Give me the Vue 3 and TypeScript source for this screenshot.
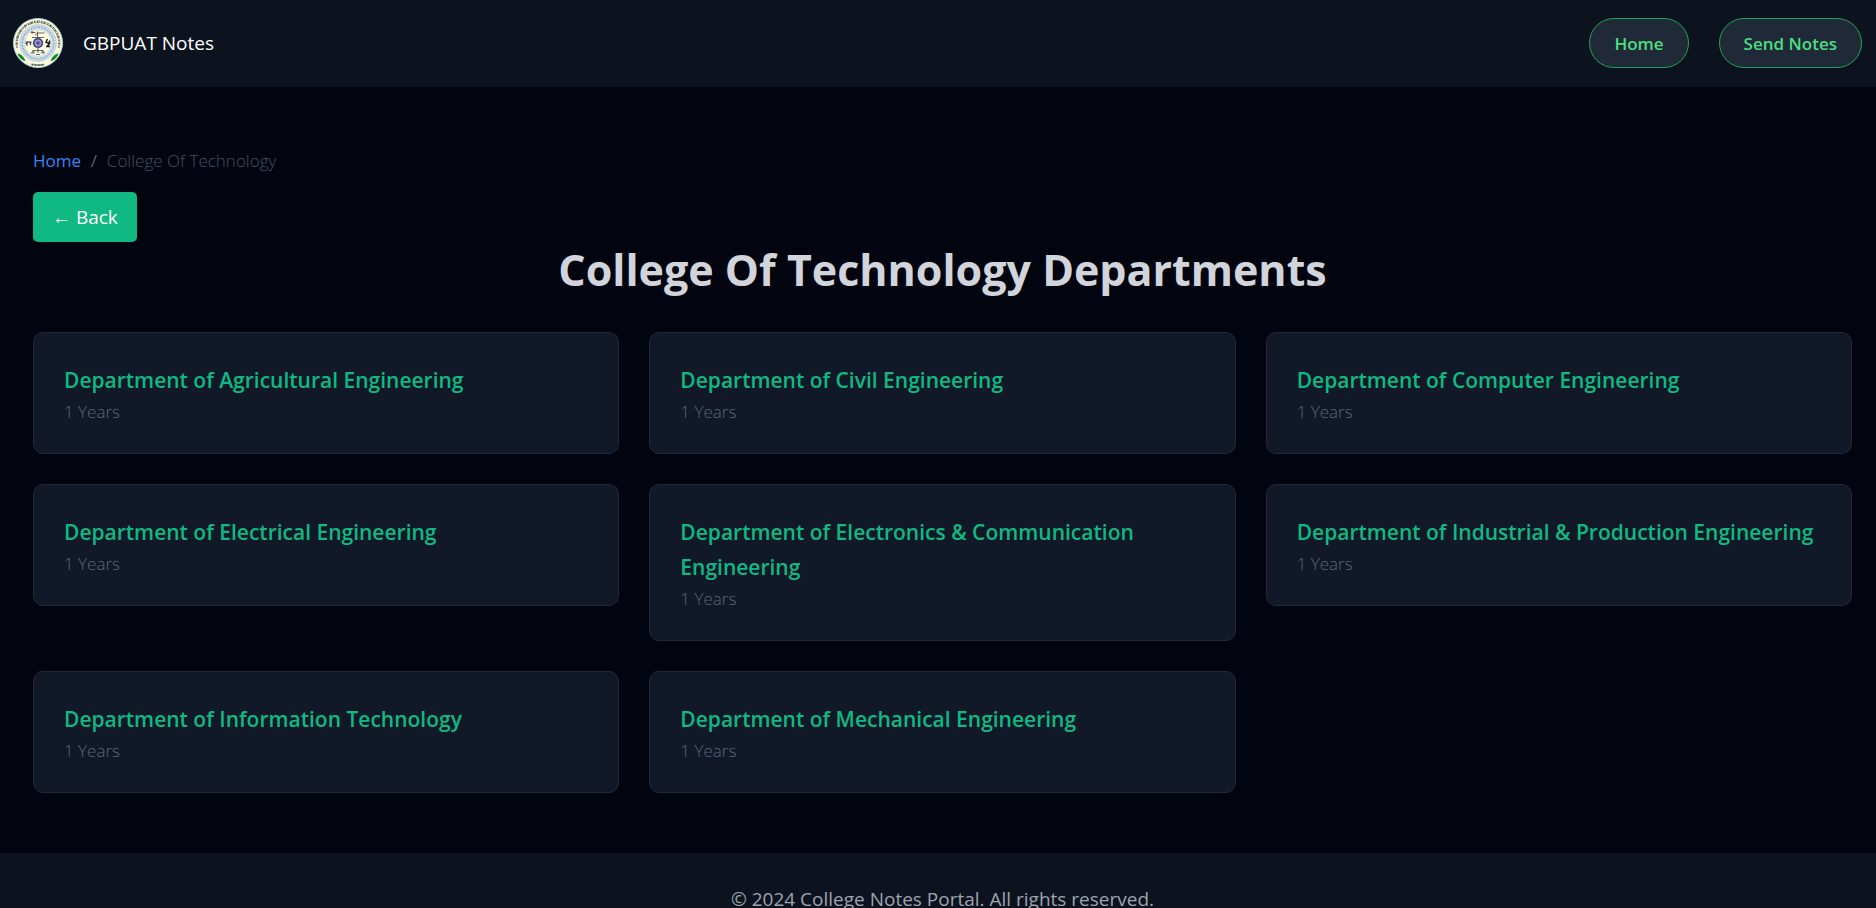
<script setup lang="ts">
interface Department {
  name: string
  years: number
}

const college = 'College Of Technology'

const departments: Department[] = [
  { name: 'Department of Agricultural Engineering', years: 1 },
  { name: 'Department of Civil Engineering', years: 1 },
  { name: 'Department of Computer Engineering', years: 1 },
  { name: 'Department of Electrical Engineering', years: 1 },
  { name: 'Department of Electronics & Communication Engineering', years: 1 },
  { name: 'Department of Industrial & Production Engineering', years: 1 },
  { name: 'Department of Information Technology', years: 1 },
  { name: 'Department of Mechanical Engineering', years: 1 },
]

const spokes = Array.from({ length: 8 }, (_, i) => i * 22.5)
</script>

<template>
  <div class="page">
    <header class="topbar">
      <a class="brand" href="#">
        <svg class="logo" viewBox="0 0 50 50" aria-hidden="true">
          <circle cx="25" cy="25" r="24.5" fill="#fbfade" stroke="#a9cfdc" />
          <circle cx="25" cy="25" r="18.3" fill="#cfe0ee" stroke="#8fb0c4" stroke-width=".5" />
          <circle cx="25" cy="25" r="13.4" fill="#fdfcdc" stroke="#bccfd8" stroke-width=".6" />
          <path d="M4.200 29.500A21.300 21.300 0 1 1 45.800 29.500" fill="none" stroke="#565650" stroke-width="2.300" stroke-dasharray="1 .6 .5 .8 1.500 .6 .7 1.100" />
          <path d="M4.500 22A20.800 20.800 0 0 1 45.500 22" fill="none" stroke="#565650" stroke-width=".5" stroke-dasharray="4 1.600 6 1.400" />
          <circle cx="25" cy="25" r="15.800" fill="none" stroke="#8796ac" stroke-width="1.700" stroke-dasharray=".8 .9 .5 .7" />
          <path d="M4.500 35.500c3 0 6.500 3 8 7.500-3.500-.5-6.700-3.500-8-7.500z" fill="#118a2c" />
          <path d="M45.500 35.500c-3 0-6.500 3-8 7.500 3.500-.5 6.700-3.500 8-7.500z" fill="#118a2c" />
          <path d="M18.500 46.300q6.500 1.500 13 0" fill="none" stroke="#5a584d" stroke-width="1.800" stroke-dasharray="1.700 .4 .8 .4" />
          <g fill="none" stroke="#403a4e" stroke-width=".8">
            <path d="M18.500 14.500h4M24.500 13.500v6M22 17l3-2h6.500M19 19.500h12M25 30v5M20 32.500h10M20 32.500l-1.500 2.500h3zM30 32.500l-1.500 2.500h3zM23 36.500h4" />
            <path d="M12.500 24.200h6M14 24.200v3.500M17.500 24v3M12.500 25.500h2" stroke-width="1.200" />
            <path d="M34.500 21l-1.500 3 3.500 1.500-2.500 3M33 28.500h4M36.500 22.500v3" stroke="#171a24" stroke-width="1.500" />
          </g>
          <path d="M18 13.500h2.500v1.800H18z" fill="#8d3545" />
          <circle cx="25" cy="25" r="4.300" fill="#d9d6ee" stroke="#413a86" stroke-width="1.500" />
          <path
            v-for="angle in spokes"
            :key="angle"
            d="M19.500 25h11"
            stroke="#413a86"
            stroke-width=".5"
            :transform="`rotate(${angle} 25 25)`"
          />
        </svg>
        <span>GBPUAT Notes</span>
      </a>
      <nav class="links">
        <a class="pill" href="#">Home</a>
        <a class="pill" href="#">Send Notes</a>
      </nav>
    </header>

    <main class="content">
      <nav class="crumbs" aria-label="Breadcrumb">
        <a href="#">Home</a>
        <span class="slash">/</span>
        <span>{{ college }}</span>
      </nav>
      <button class="back" type="button">← Back</button>
      <h1>{{ college }} Departments</h1>
      <section class="grid">
        <a v-for="item in departments" :key="item.name" class="card" href="#">
          <h2>{{ item.name }}</h2>
          <p>{{ item.years }} Years</p>
        </a>
      </section>
    </main>

    <footer class="footer">© 2024 College Notes Portal. All rights reserved.</footer>
  </div>
</template>

<style>
body {
  margin: 0;
  background: #02050f;
}
</style>

<style scoped>
.page {
  min-height: 100vh;
  background: #02050f;
  font-family: "Segoe UI", "Open Sans", "Noto Sans", sans-serif;
  font-size: 17px;
}

a {
  text-decoration: none;
}

.topbar {
  display: flex;
  align-items: center;
  justify-content: space-between;
  height: 87px;
  padding: 0 14px 2px 13px;
  box-sizing: border-box;
  background: #0d131e;
}

.brand {
  display: flex;
  align-items: center;
  gap: 20px;
  color: #fff;
  font-size: 19px;
}

.logo {
  width: 50px;
  height: 50px;
}

.links {
  display: flex;
  gap: 30px;
}

.pill {
  height: 50px;
  padding: 0 24px;
  box-sizing: border-box;
  border: 1px solid #22a352;
  border-radius: 25px;
  background: #1f2937;
  color: #4ade80;
  font-weight: 600;
  line-height: 50px;
}

.content {
  padding: 60px 24px 60px 33px;
}

.crumbs {
  display: flex;
  gap: 10px;
  margin-bottom: 18px;
  color: #465162;
  font-weight: 300;
  line-height: 27px;
}

.crumbs a {
  color: #3b82f6;
  font-weight: 400;
}

.slash {
  color: #8b92a0;
}

.back {
  display: block;
  height: 50px;
  padding: 0 19px;
  border: 0;
  border-radius: 5px;
  background: #10b981;
  color: #fff;
  font-family: inherit;
  font-size: 19px;
}

h1 {
  margin: 0 0 35px;
  color: #d1d5db;
  font-size: 43px;
  font-weight: 700;
  line-height: 55px;
  text-align: center;
}

.grid {
  display: grid;
  grid-template-columns: repeat(3, 1fr);
  align-items: start;
  gap: 30px;
}

.card {
  padding: 30px 30px 28px;
  border: 1px solid #1f2937;
  border-radius: 10px;
  background: #111827;
}

.card h2 {
  margin: 0;
  color: #10b981;
  font-size: 21px;
  font-weight: 600;
  line-height: 35px;
}

.card p {
  margin: 0;
  color: #5b6677;
  font-weight: 300;
  line-height: 27px;
}

.footer {
  padding: 31px 0 30px 9px;
  background: #0d131e;
  color: #9ca3af;
  font-size: 19px;
  line-height: 30px;
  text-align: center;
}
</style>
